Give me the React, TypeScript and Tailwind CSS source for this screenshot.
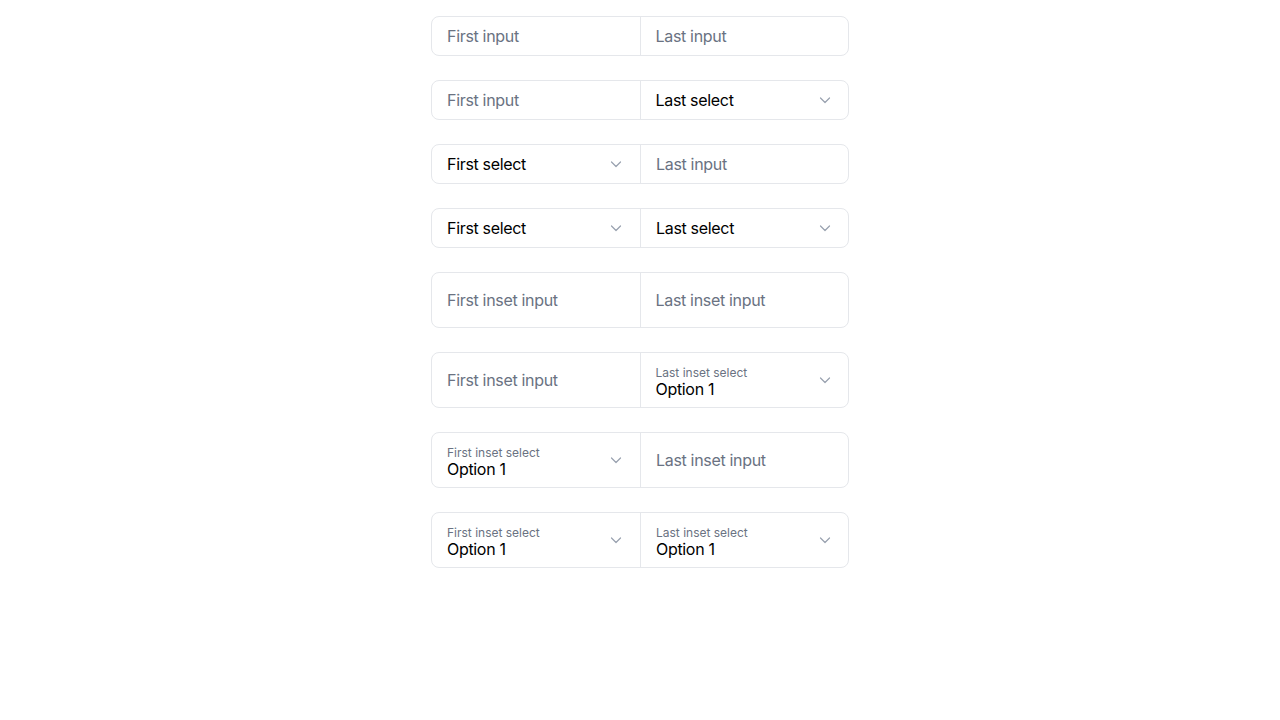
import React from 'react';

function Chevron() {
  return (
    <svg viewBox="0 0 16 16" className="w-4 h-4 shrink-0 text-gray-400" fill="none" stroke="currentColor" strokeWidth={1.2} strokeLinecap="round" strokeLinejoin="round">
      <path d="M3.5 6 8 10.5 12.5 6" />
    </svg>
  );
}

function Input({ placeholder, inset }: { placeholder: string; inset?: boolean }) {
  return (
    <input
      placeholder={placeholder}
      className={
        "flex-1 min-w-0 bg-transparent px-[15px] text-base tracking-[-0.02em] text-gray-900 placeholder:text-gray-500 outline-none " +
        (inset ? "h-[54px]" : "h-[38px]")
      }
    />
  );
}

function Select({ label, inset, first }: { label: string; inset?: boolean; first?: boolean }) {
  const pad = first ? "pl-[15px] pr-4" : "pl-[15px] pr-[15px]";
  if (inset) {
    return (
      <div className={"flex-1 min-w-0 h-[54px] flex items-center justify-between " + pad}>
        <div className="flex flex-col pt-1">
          <span className="text-xs leading-4 text-gray-500 translate-y-px">{label}</span>
          <span className="text-base leading-5 tracking-[-0.02em] text-black -translate-y-px">Option 1</span>
        </div>
        <Chevron />
      </div>
    );
  }
  return (
    <div className={"flex-1 min-w-0 h-[38px] flex items-center justify-between " + pad}>
      <span className="text-base tracking-[-0.02em] text-black">{label}</span>
      <Chevron />
    </div>
  );
}

type Cell = { kind: 'input' | 'select'; text: string };

function Group({ first, last, inset }: { first: Cell; last: Cell; inset?: boolean }) {
  const render = (c: Cell, isFirst: boolean) =>
    c.kind === 'input' ? (
      <Input placeholder={c.text} inset={inset} />
    ) : (
      <Select label={c.text} inset={inset} first={isFirst} />
    );
  return (
    <div className="flex w-full rounded-lg border border-gray-200 bg-white divide-x divide-gray-200">
      {render(first, true)}
      {render(last, false)}
    </div>
  );
}

export default function App() {
  return (
    <div className="min-h-screen bg-white pt-4 font-['Inter',sans-serif]">
      <div className="mx-auto w-[418px] flex flex-col gap-6">
        <Group first={{ kind: 'input', text: 'First input' }} last={{ kind: 'input', text: 'Last input' }} />
        <Group first={{ kind: 'input', text: 'First input' }} last={{ kind: 'select', text: 'Last select' }} />
        <Group first={{ kind: 'select', text: 'First select' }} last={{ kind: 'input', text: 'Last input' }} />
        <Group first={{ kind: 'select', text: 'First select' }} last={{ kind: 'select', text: 'Last select' }} />
        <Group inset first={{ kind: 'input', text: 'First inset input' }} last={{ kind: 'input', text: 'Last inset input' }} />
        <Group inset first={{ kind: 'input', text: 'First inset input' }} last={{ kind: 'select', text: 'Last inset select' }} />
        <Group inset first={{ kind: 'select', text: 'First inset select' }} last={{ kind: 'input', text: 'Last inset input' }} />
        <Group inset first={{ kind: 'select', text: 'First inset select' }} last={{ kind: 'select', text: 'Last inset select' }} />
      </div>
    </div>
  );
}
